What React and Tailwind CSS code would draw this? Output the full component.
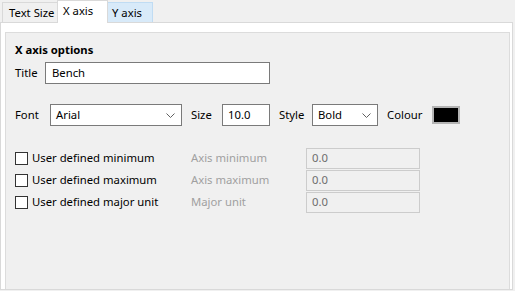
import React from "react";

const Chevron = () => (
  <svg width="9" height="5" viewBox="0 0 9 5" className="shrink-0">
    <path d="M0.5 0.5 L4.5 4.5 L8.5 0.5" fill="none" stroke="#606060" strokeWidth="1" />
  </svg>
);

const Select = ({ value, width }) => (
  <div
    className={`flex items-center justify-between h-[22px] border border-[#7a7a7a] bg-white pl-[5px] pr-[6px] text-black ${width}`}
  >
    <span>{value}</span>
    <Chevron />
  </div>
);

const CheckRow = ({ label, axisLabel }) => (
  <div className="flex items-center h-[22px]">
    <div className="flex items-center w-[176px]">
      <div className="w-[13px] h-[13px] border border-[#333333] bg-white" />
      <span className="ml-[4px] text-black">{label}</span>
    </div>
    <span className="w-[115px] text-[#a0a0a0]">{axisLabel}</span>
    <div className="flex items-center w-[114px] h-[21px] border border-[#cccccc] bg-[#f0f0f0] pl-[5px] text-[#6d6d6d]">
      0.0
    </div>
  </div>
);

export default function App() {
  return (
    <div
      className="w-[515px] h-[291px] bg-[#f0f0f0] text-[11.3px] leading-[16px] text-black overflow-hidden whitespace-nowrap"
      style={{ fontFamily: '"Noto Sans", "Open Sans", sans-serif' }}
    >
      {/* Tabs */}
      <div className="flex items-end h-[22px] pl-[2px]">
        <div className="h-[20px] w-[55px] border-l border-t border-[#d9d9d9] bg-[#f0f0f0] pl-[6px] flex items-center">
          Text Size
        </div>
        <div className="relative z-10 -mb-px h-[23px] w-[51px] border-l border-t border-r border-[#d9d9d9] bg-white pl-[5px] pb-[2px] flex items-center">
          X axis
        </div>
        <div className="h-[20px] w-[45px] border-t border-r border-[#c0dcf3] bg-[#d8eaf9] pl-[4px] flex items-center">
          Y axis
        </div>
      </div>

      {/* Tab page */}
      <div className="w-[513px] h-[268px] border border-[#d9d9d9] bg-white pl-[4px] pt-[9px] pr-[2px] overflow-hidden">
        <div className="h-[280px] border border-[#dcdcdc] bg-[#f0f0f0] pl-[9px] pt-[9px]">
          <div className="font-bold h-[16px]">X axis options</div>

          <div className="flex items-center h-[22px] mt-[4px]">
            <span className="w-[30px]">Title</span>
            <div className="flex items-center w-[225px] h-[22px] border border-[#7a7a7a] bg-white pl-[6px]">
              Bench
            </div>
          </div>

          <div className="flex items-center h-[22px] mt-[20px]">
            <span className="w-[35px]">Font</span>
            <Select value="Arial" width="w-[132px]" />
            <span className="ml-[9px] w-[31px]">Size</span>
            <div className="flex items-center w-[48px] h-[22px] border border-[#7a7a7a] bg-white pl-[5px]">
              10.0
            </div>
            <span className="ml-[9px] w-[33px]">Style</span>
            <Select value="Bold" width="w-[66px]" />
            <span className="ml-[9px] w-[45px]">Colour</span>
            <div className="w-[28px] h-[18px] border-2 border-[#b4b4b4] bg-black" />
          </div>

          <div className="flex flex-col mt-[21px]">
            <CheckRow label="User defined minimum" axisLabel="Axis minimum" />
            <CheckRow label="User defined maximum" axisLabel="Axis maximum" />
            <CheckRow label="User defined major unit" axisLabel="Major unit" />
          </div>
        </div>
      </div>
    </div>
  );
}
